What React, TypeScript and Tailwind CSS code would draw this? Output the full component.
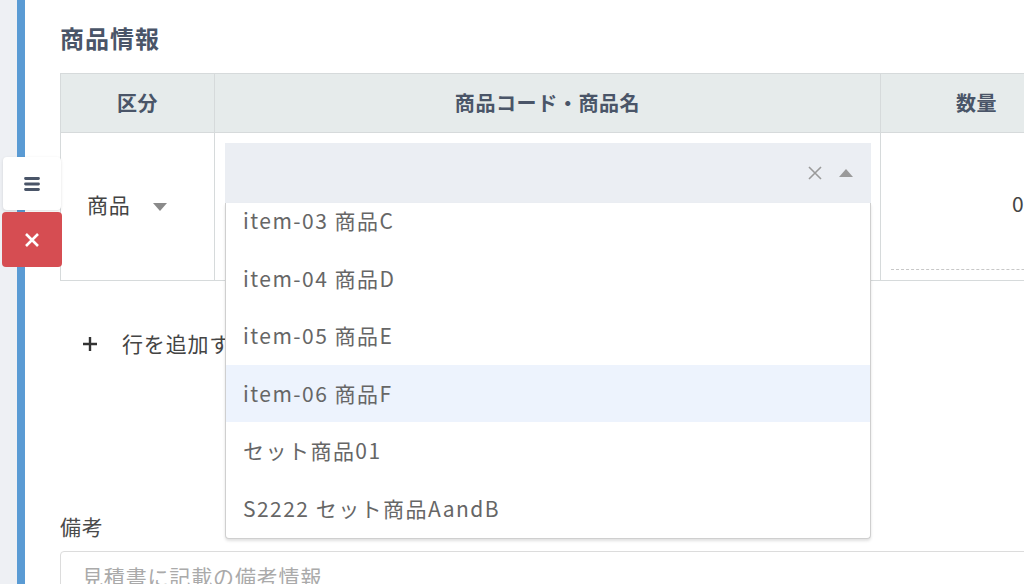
import React from "react";

const items = [
  "item-03 商品C",
  "item-04 商品D",
  "item-05 商品E",
  "item-06 商品F",
  "セット商品01",
  "S2222 セット商品AandB",
];

const Caret: React.FC<{ up?: boolean; className?: string }> = ({ up, className }) => (
  <svg width="16" height="10" viewBox="0 0 16 10" className={className}>
    {up ? <path d="M8 1 L15 9 L1 9 Z" fill="#9a9a9a" /> : <path d="M1 1 L15 1 L8 9 Z" fill="#8a8a8a" />}
  </svg>
);

export default function App() {
  return (
    <div className="relative w-[1024px] h-[584px] overflow-hidden flex bg-white font-['Noto_Sans_CJK_JP','Liberation_Sans',sans-serif]">
      <div className="w-[17px] shrink-0 bg-[#eef0f4]" />
      <div className="w-[8px] shrink-0 bg-[#5a9bd4]" />

      <main className="flex-1 min-w-0 pl-[35px] pt-[22px]">
        <h2 className="text-[24px] leading-[32px] font-bold tracking-[0.04em] text-[#4a5568]">商品情報</h2>

        {/* 明細テーブル */}
        <div className="mt-[19px] w-[1100px] border-l border-t border-[#d6dadb]">
          <div className="grid grid-cols-[154px_666px_280px] bg-[#e6ebeb] text-[20px] font-bold tracking-[0.03em] text-[#4a5568]">
            <div className="h-[59px] flex items-center justify-center border-r border-b border-[#d6dadb]">区分</div>
            <div className="h-[59px] flex items-center justify-center border-r border-b border-[#d6dadb]">商品コード・商品名</div>
            <div className="h-[59px] flex items-center justify-start pl-[75px] border-r border-b border-[#d6dadb]">数量</div>
          </div>
          <div className="grid grid-cols-[154px_666px_280px]">
            <div className="h-[148px] flex items-center pl-[26px] gap-[22px] border-r border-b border-[#d6dadb] text-[21px] tracking-[0.03em] text-[#444]">
              <span className="mt-[-3px]">商品</span>
              <Caret />
            </div>
            <div className="relative h-[148px] pt-[10px] pl-[10px] pr-[9px] border-r border-b border-[#d6dadb]">
              <div className="h-[60px] bg-[#ebeef3] flex items-center justify-end pr-[17px] gap-[16px]">
                <svg width="14" height="14" viewBox="0 0 14 14">
                  <path d="M1 1 L13 13 M13 1 L1 13" stroke="#9a9a9a" strokeWidth="1.6" />
                </svg>
                <Caret up />
              </div>
              <div className="absolute z-10 left-[10px] right-[9px] top-[70px] h-[336px] overflow-hidden bg-white border border-t-0 border-[#cfcfcf] rounded-b-[4px] shadow-[0_2px_3px_rgba(0,0,0,0.12)]">
                <ul className="mt-[-11px]">
                  {items.map((item) => (
                    <li
                      key={item}
                      className={`h-[57.6px] flex items-center pl-[17px] text-[21px] tracking-[0.07em] text-[#666] ${
                        item === "item-06 商品F" ? "bg-[#edf3fd] text-[#444]" : ""
                      }`}
                    >
                      {item}
                    </li>
                  ))}
                </ul>
              </div>
            </div>
            <div className="h-[148px] flex flex-col justify-end pl-[10px] pb-[10px] border-r border-b border-[#d6dadb]">
              <div className="flex-1 flex items-center pl-[121px] pt-[6px] text-[21px] text-[#444]">0</div>
              <div className="border-b border-dashed border-[#c8c8c8]" />
            </div>
          </div>
        </div>

        <button className="mt-[48px] h-[30px] flex items-center pl-[22px] gap-[24px] text-[21px] tracking-[0.04em] text-[#444]">
          <svg width="16" height="16" viewBox="0 0 16 16">
            <path d="M8 1 V15 M1 8 H15" stroke="#333" strokeWidth="2.4" />
          </svg>
          <span>行を追加する</span>
        </button>

        <p className="mt-[152px] text-[21px] leading-[30px] tracking-[0.03em] text-[#4a4a4a]">備考</p>
        <div className="mt-[10px] w-[1100px] h-[80px] border border-[#dcdcdc] rounded-[4px] pl-[21px] pt-[9px] text-[21px] leading-[30px] tracking-[0.04em] text-[#aaa]">
          見積書に記載の備考情報
        </div>
      </main>

      {/* 行操作ボタン */}
      <div className="absolute left-[2px] top-[157px] flex flex-col gap-[2px]">
        <button className="ml-[1px] w-[58px] h-[53px] flex items-center justify-center bg-white rounded-[4px] shadow-[0_1px_3px_rgba(0,0,0,0.12)]">
          <svg width="16" height="16" viewBox="0 0 16 16">
            <path d="M1.5 2.5 H14.5 M1.5 8 H14.5 M1.5 13.5 H14.5" stroke="#4a5568" strokeWidth="2.8" strokeLinecap="round" />
          </svg>
        </button>
        <button className="w-[60px] h-[55px] flex items-center justify-center bg-[#d64d52] rounded-[4px]">
          <svg width="16" height="16" viewBox="0 0 16 16">
            <path d="M2 2 L14 14 M14 2 L2 14" stroke="#fff" strokeWidth="2.6" />
          </svg>
        </button>
      </div>
    </div>
  );
}
